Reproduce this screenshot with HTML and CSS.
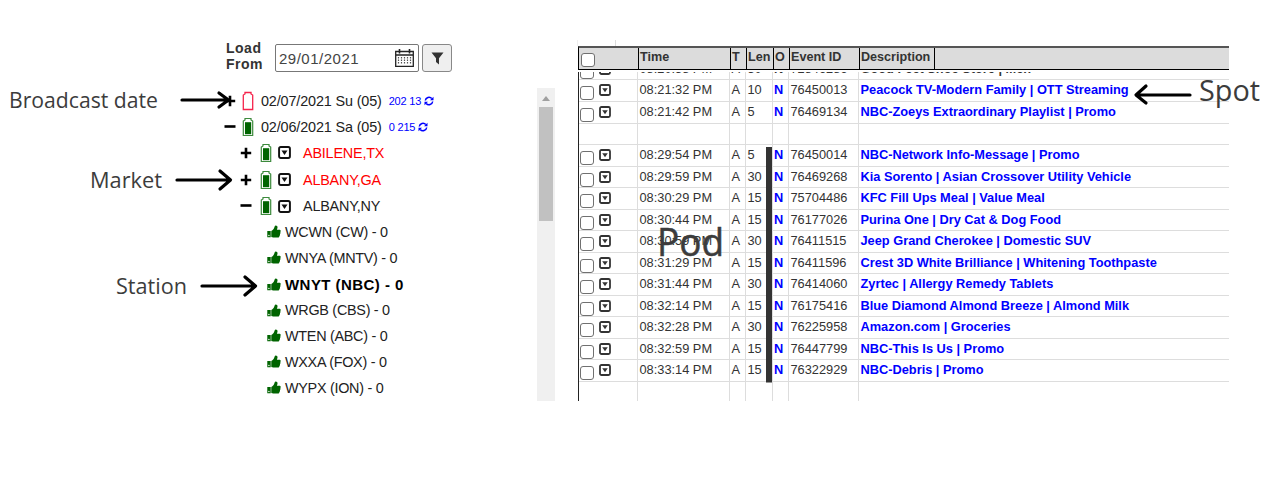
FILE: index.html
```html
<!DOCTYPE html>
<html lang="en">
<head>
<meta charset="utf-8">
<title>Broadcast log</title>
<link rel="stylesheet" href="styles.css">
</head>
<body>
<svg class="defs" aria-hidden="true">
  <symbol id="plus" viewBox="0 0 12 12"><path d="M.8 6h10.400M6 .8v10.400" stroke="#000" stroke-width="2.600" fill="none"/></symbol>
  <symbol id="minus" viewBox="0 0 12 12"><path d="M.5 5.500h11" stroke="#000" stroke-width="2.600" fill="none"/></symbol>
  <symbol id="battery" viewBox="0 0 12 20"><path d="M3 3V1.500h6V3l1.700 1V18.500H1.300V4z" fill="#fff" stroke="#f5234b" stroke-width="1.300"/></symbol>
  <symbol id="battery-full" viewBox="0 0 12 20"><path d="M3 3V1.500h6V3l1.700 1V18.500H1.300V4z" fill="#fff" stroke="#3c8a3c" stroke-width="1.200"/><path d="M3 5.200h6.200v12H3z" fill="#006400"/></symbol>
  <symbol id="drop" viewBox="0 0 12 12"><rect x="1" y="1" width="10" height="10" rx="1.500" fill="#fff" stroke="currentColor" stroke-width="1.800"/><path d="M3.200 4.200h5.600L6 8.200z" fill="currentColor"/></symbol>
  <symbol id="thumb" viewBox="0 0 14 13"><path d="M.3 6h3.400v6.300H.3zM4.300 6C6 5.300 6.600 4 7.200 2.800 7.600 1.600 7.800.5 8.700.5c1.600 0 2.200 1.400 1.600 3L9.900 4.800h2.300c1.700 0 2 1.600 1 2.300.6.700.4 1.600-.3 2 .3.800.1 1.400-.5 1.800 0 1.200-.6 1.700-1.700 1.700H8.200c-1.600 0-2.500-.6-3.900-.7z" fill="#006400"/><circle cx="1.900" cy="10.500" r=".7" fill="#fff"/></symbol>
  <symbol id="sync" viewBox="0 0 10 10"><path d="M1.300 4.500A3.700 3.700 0 0 1 7.800 2.600M8.700 5.500A3.700 3.700 0 0 1 2.200 7.400" fill="none" stroke="#00f" stroke-width="1.500"/><path d="M9.500.8v3.500H6zM.5 9.200V5.700H4z" fill="#00f"/></symbol>
</svg>
<main class="stage">
  <section class="tree-pane">
    <div class="load">
      <span class="load-label">Load<br>From</span>
      <div class="date"><span>29/01/2021</span>
        <svg width="19" height="18" viewBox="0 0 19 18"><path d="M.7 2.500h17.600v14.800H.7zM.7 6h17.600" fill="none" stroke="#222" stroke-width="1.300"/><path d="M4.500 0v4.500M14.500 0v4.500" stroke="#222" stroke-width="1.600"/><path d="M3.500 8v7M6.500 8v7M9.500 8v7M12.500 8v7M15.500 8v7" stroke="#555" stroke-width="1.200" stroke-dasharray="1.500 1"/></svg>
      </div>
      <div class="filter"><svg width="13" height="13" viewBox="0 0 13 13"><path d="M.5.5h12L8 6.200v6.300L5 10V6.200z" fill="#333"/></svg></div>
    </div>
    <div class="tree-wrap">
      <div class="tree">
        <div class="node day"><svg class="tg"><use href="#plus"/></svg><svg class="bat"><use href="#battery"/></svg><span class="t">02/07/2021 Su (05)</span><span class="n">202 13</span><svg class="sync"><use href="#sync"/></svg></div>
        <div class="node day"><svg class="tg"><use href="#minus"/></svg><svg class="bat"><use href="#battery-full"/></svg><span class="t">02/06/2021 Sa (05)</span><span class="n">0 215</span><svg class="sync"><use href="#sync"/></svg></div>
        <div class="node market red"><svg class="tg"><use href="#plus"/></svg><svg class="bat"><use href="#battery-full"/></svg><svg class="dd"><use href="#drop"/></svg><span class="t">ABILENE,TX</span></div>
        <div class="node market red"><svg class="tg"><use href="#plus"/></svg><svg class="bat"><use href="#battery-full"/></svg><svg class="dd"><use href="#drop"/></svg><span class="t">ALBANY,GA</span></div>
        <div class="node market"><svg class="tg"><use href="#minus"/></svg><svg class="bat"><use href="#battery-full"/></svg><svg class="dd"><use href="#drop"/></svg><span class="t">ALBANY,NY</span></div>
        <div class="node station"><svg class="th"><use href="#thumb"/></svg><span class="t">WCWN (CW) - 0</span></div>
        <div class="node station"><svg class="th"><use href="#thumb"/></svg><span class="t">WNYA (MNTV) - 0</span></div>
        <div class="node station current"><svg class="th"><use href="#thumb"/></svg><span class="t">WNYT (NBC) - 0</span></div>
        <div class="node station"><svg class="th"><use href="#thumb"/></svg><span class="t">WRGB (CBS) - 0</span></div>
        <div class="node station"><svg class="th"><use href="#thumb"/></svg><span class="t">WTEN (ABC) - 0</span></div>
        <div class="node station"><svg class="th"><use href="#thumb"/></svg><span class="t">WXXA (FOX) - 0</span></div>
        <div class="node station"><svg class="th"><use href="#thumb"/></svg><span class="t">WYPX (ION) - 0</span></div>
      </div>
      <div class="scroll"><i class="up"></i><i class="thumbbar"></i></div>
    </div>
  </section>
  <section class="log">
    <div class="tab"></div>
    <div class="head"><span><i class="cb"></i></span><span>Time</span><span>T</span><span>Len</span><span>O</span><span>Event ID</span><span class="desc">Description</span></div>
    <div class="body"><div class="rows" id="rows"></div></div>
  </section>
  <svg class="notes" width="1284" height="478" viewBox="0 0 1284 478">
    <g class="arrows">
      <path d="M182 100H228M219 93L228.500 100L219 107"/>
      <path d="M177 180H230M220 171L230.500 180L220 189"/>
      <path d="M202 286H255M245 277L255.500 286L245 295"/>
      <path d="M1190 95H1137M1146 86L1136 95L1146 103"/>
    </g>
    <path d="M769 147V382.500" stroke="#333" stroke-width="6"/>
    <g class="labels">
      <text x="9" y="108" font-size="21.500" textLength="149" lengthAdjust="spacingAndGlyphs">Broadcast date</text>
      <text x="90" y="188" font-size="21.500" textLength="72" lengthAdjust="spacingAndGlyphs">Market</text>
      <text x="116" y="294" font-size="21.500" textLength="71" lengthAdjust="spacingAndGlyphs">Station</text>
      <text x="1199" y="101" font-size="28.500" textLength="61" lengthAdjust="spacingAndGlyphs">Spot</text>
      <text class="pod" x="657" y="256" font-size="38" textLength="67" lengthAdjust="spacingAndGlyphs">Pod</text>
    </g>
  </svg>
</main>
<script src="log.js"></script>
</body>
</html>
```
FILE: styles.css
```css
* { box-sizing: border-box; }
body { margin: 0; background: #fff; font-family: "Liberation Sans", Arial, sans-serif; color: #222; }
.defs { position: absolute; width: 0; height: 0; }
.stage { position: relative; width: 1284px; height: 478px; display: flex; overflow: hidden; }
.tree-pane { width: 577px; padding: 40px 22px 0 0; }
.load { display: flex; align-items: flex-start; height: 48px; padding-left: 226px; }
.load-label { width: 49px; font: bold 14px/16px "Liberation Sans", Arial, sans-serif; letter-spacing: .5px; color: #333; }
.date { display: flex; align-items: center; justify-content: space-between; width: 144px; height: 28px; margin-top: 4px; padding: 0 4px 0 3px; border: 1.5px solid #777; border-radius: 2px; font-size: 15px; letter-spacing: .5px; color: #444; }
.filter { display: flex; align-items: center; justify-content: center; width: 30px; height: 28px; margin: 4px 0 0 3px; border: 1.5px solid #888; border-radius: 3px; background: #efefef; }
.tree-wrap { display: flex; justify-content: space-between; height: 313px; }
.tree { display: grid; grid-template-rows: 26px 26px 26px 28px 25px 26px 26px 27px 25px 26px 26px 26px; }
.node { display: flex; align-items: center; padding-bottom: 1px; font-size: 14.4px; letter-spacing: -.14px; white-space: nowrap; }
.day { padding-left: 224px; }
.market { padding-left: 240px; letter-spacing: -.2px; }
.station { padding-left: 267px; letter-spacing: -.28px; }
.red { color: #f00; }
.tg { width: 12px; height: 12px; }
.bat { width: 12px; height: 20px; margin-left: 6px; }
.market .bat { margin-left: 8px; }
.day .t { margin-left: 7px; }
.n { margin-left: 7px; padding-top: 1px; font-size: 11px; letter-spacing: -.2px; color: #00f; }
.sync { width: 10px; height: 10px; margin-left: 3px; }
.dd { width: 13px; height: 13px; margin-left: 6px; color: #111; }
.market .t { margin-left: 12px; }
.th { width: 14px; height: 13px; }
.station .t { margin-left: 4px; }
.current { font-size: 15px; font-weight: bold; color: #000; letter-spacing: .45px; }
.scroll { display: flex; flex-direction: column; align-items: center; width: 18px; background: #f0f0f0; }
.up { width: 0; height: 0; margin: 8px 0 6px; border: 4px solid transparent; border-top: 0; border-bottom: 5px solid #a0a0a0; }
.thumbbar { width: 14px; height: 114px; background: #c1c1c1; }
.log { width: 652px; padding-top: 40px; }
.tab { width: 39px; height: 6px; border-right: 1px solid #ddd; border-left: 1px solid #eee; }
.head, .row { display: grid; grid-template-columns: 59px 92px 16px 27px 16px 70px 1fr; }
.head { grid-template-columns: 60px 92px 16px 27px 16px 70px 1fr; width: 651px; height: 24px; margin-left: 1px; border-top: 2px solid #555; border-bottom: 1px solid #000; border-left: 1px solid #000; background: #dcdcdc; font: bold 12.6px/19px "Liberation Sans", Arial, sans-serif; color: #333; }
.head span { padding-left: 1px; border-right: 1px solid #000; white-space: nowrap; }
.head .desc { width: 75px; }
.cb { display: block; width: 14px; height: 14px; border: 1.5px solid #707070; border-radius: 3px; background: #fff; }
.head .cb { margin: 5px 0 0 1px; }
.body { height: 329px; margin: 2px 0 0 1px; overflow: hidden; border-left: 1px solid #222; }
.rows { margin-top: -13.1px; }
.row { height: 21.54px; font-size: 12.8px; line-height: 20.5px; color: #333; }
.row span { padding-left: 1.5px; border-right: 1px solid #ddd; border-bottom: 1px solid #ddd; white-space: nowrap; }
.row span:last-child { border-right: 0; }
.row .ctl { display: flex; padding-left: 1px; }
.ctl .cb { margin-top: 6px; }
.ctl svg { width: 12px; height: 12px; margin: 4px 0 0 5px; }
.row .o, .row .d { font-weight: bold; color: #00f; }
.row .o { padding-left: 1px; }
.row:first-child .o, .row:first-child .d { color: #333; }
.notes { position: absolute; left: 0; top: 0; }
.arrows { fill: none; stroke: #000; stroke-width: 3.2; stroke-linecap: round; stroke-linejoin: round; }
.labels { font-family: "Open Sans", "Noto Sans", sans-serif; fill: #3c3c3c; }
.pod { stroke: #3c3c3c; stroke-width: .5px; }
```
FILE: log.js
```js
const spots = [
  ["08:20:58 PM", "30", "72846286", "Good Feet Shoe Store | Men"],
  ["08:21:32 PM", "10", "76450013", "Peacock TV-Modern Family | OTT Streaming"],
  ["08:21:42 PM", "5", "76469134", "NBC-Zoeys Extraordinary Playlist | Promo"],
  null,
  ["08:29:54 PM", "5", "76450014", "NBC-Network Info-Message | Promo"],
  ["08:29:59 PM", "30", "76469268", "Kia Sorento | Asian Crossover Utility Vehicle"],
  ["08:30:29 PM", "15", "75704486", "KFC Fill Ups Meal | Value Meal"],
  ["08:30:44 PM", "15", "76177026", "Purina One | Dry Cat & Dog Food"],
  ["08:30:59 PM", "30", "76411515", "Jeep Grand Cherokee | Domestic SUV"],
  ["08:31:29 PM", "15", "76411596", "Crest 3D White Brilliance | Whitening Toothpaste"],
  ["08:31:44 PM", "30", "76414060", "Zyrtec | Allergy Remedy Tablets"],
  ["08:32:14 PM", "15", "76175416", "Blue Diamond Almond Breeze | Almond Milk"],
  ["08:32:28 PM", "30", "76225958", "Amazon.com | Groceries"],
  ["08:32:59 PM", "15", "76447799", "NBC-This Is Us | Promo"],
  ["08:33:14 PM", "15", "76322929", "NBC-Debris | Promo"],
  null
];
document.getElementById("rows").innerHTML = spots.map(s => s
  ? `<div class="row"><span class="ctl"><i class="cb"></i><svg><use href="#drop"/></svg></span><span>${s[0]}</span><span>A</span><span>${s[1]}</span><span class="o">N</span><span>${s[2]}</span><span class="d">${s[3].replace("&", "&amp;")}</span></div>`
  : `<div class="row">${"<span></span>".repeat(7)}</div>`).join("");
```
